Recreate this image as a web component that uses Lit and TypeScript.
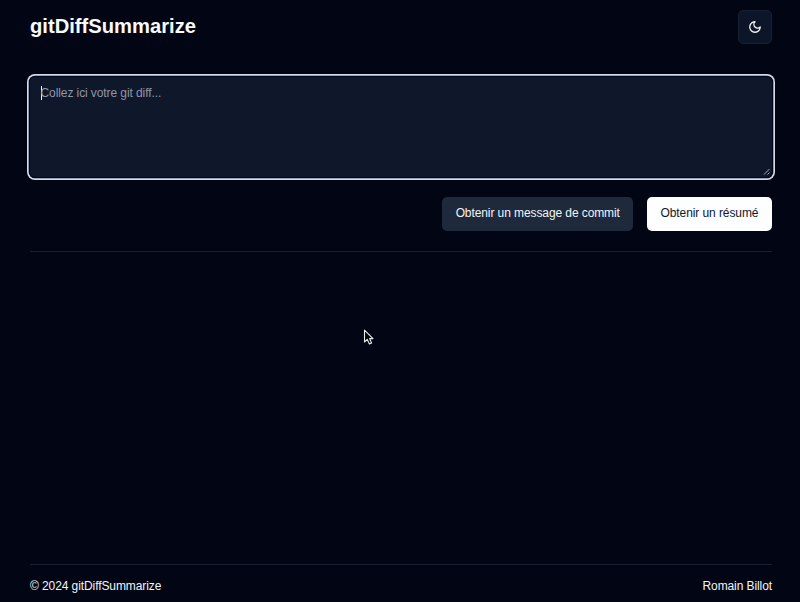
import { LitElement, html, css } from "lit";
import { customElement } from "lit/decorators.js";

@customElement("app-root")
export class AppRoot extends LitElement {
  static styles = css`
    :host {
      display: flex;
      flex-direction: column;
      box-sizing: border-box;
      height: 602px;
      padding: 0 28px 0 30px;
      background: #010514;
      color: #f1f5f9;
      font: 12px/17px "Liberation Sans", Arial, sans-serif;
      letter-spacing: -0.09px;
      overflow: hidden;
      position: relative;
    }
    .header {
      display: flex;
      justify-content: space-between;
      align-items: center;
      height: 53px;
    }
    .title {
      margin: 0;
      padding-bottom: 2px;
      color: #f8fafc;
      font-size: 20.2px;
      line-height: 28px;
      font-weight: 700;
      letter-spacing: 0;
    }
    .theme {
      display: flex;
      align-items: center;
      justify-content: center;
      box-sizing: border-box;
      width: 34px;
      height: 34px;
      padding: 0;
      border: 1px solid #172134;
      border-radius: 5px;
      background: #0d1628;
      color: #f8fafc;
    }
    .field {
      box-sizing: border-box;
      display: flex;
      align-items: flex-start;
      height: 100px;
      margin-top: 24px;
      padding: 8px 10.5px;
      border-radius: 5px;
      background: #0f172a;
      color: #8d97a8;
      box-shadow: 0 0 0 1.3px #020617, 0 0 0 3px #d3dae5;
      position: relative;
    }
    .caret {
      width: 1px;
      height: 14px;
      margin: 1px -1px 0 0;
      background: #f8fafc;
    }
    .grip {
      position: absolute;
      right: 1px;
      bottom: 1px;
    }
    .actions {
      display: flex;
      justify-content: flex-end;
      gap: 13.5px;
      margin-top: 20px;
    }
    .button {
      box-sizing: border-box;
      height: 34px;
      padding: 0 13.6px 1px;
      border: 0;
      border-radius: 5px;
      background: #1e293b;
      color: #f1f5f9;
      font: inherit;
      letter-spacing: inherit;
      white-space: nowrap;
    }
    .primary {
      background: #fdfeff;
      color: #0f172a;
    }
    .rule {
      height: 1px;
      margin-top: 20px;
      background: #172131;
    }
    .main {
      flex: 1;
    }
    .footer {
      display: flex;
      justify-content: space-between;
      box-sizing: border-box;
      height: 38px;
      padding-top: 13px;
      border-top: 1px solid #172131;
    }
    .pointer {
      position: absolute;
      left: 363px;
      top: 329px;
    }
  `;

  render() {
    return html`
      <header class="header">
        <h1 class="title">gitDiffSummarize</h1>
        <button class="theme" aria-label="Thème">
          <svg width="14" height="14" viewBox="0 0 24 24" fill="none" stroke="currentColor" stroke-width="2.2" stroke-linecap="round" stroke-linejoin="round">
            <path d="M12 3a6 6 0 0 0 9 9 9 9 0 1 1-9-9Z" />
          </svg>
        </button>
      </header>
      <div class="field">
        <span class="caret"></span><span>Collez ici votre git diff...</span>
        <svg class="grip" width="8" height="8" viewBox="0 0 8 8" stroke="#b5bdc9" stroke-width="0.9">
          <path d="M1 6.5 6.5 1M4.5 6.5l2-2" />
        </svg>
      </div>
      <div class="actions">
        <button class="button">Obtenir un message de commit</button>
        <button class="button primary">Obtenir un résumé</button>
      </div>
      <div class="rule"></div>
      <main class="main"></main>
      <footer class="footer">
        <span>© 2024 gitDiffSummarize</span>
        <span>Romain Billot</span>
      </footer>
      <svg class="pointer" width="12" height="17" viewBox="0 0 12 17">
        <path d="M1.5 1.2V13L4.3 10.4 6.4 15 8.6 14 6.6 9.6H10Z" fill="#05070d" stroke="#e8ebf0" stroke-width="1.1" stroke-linejoin="round" />
      </svg>
    `;
  }
}
